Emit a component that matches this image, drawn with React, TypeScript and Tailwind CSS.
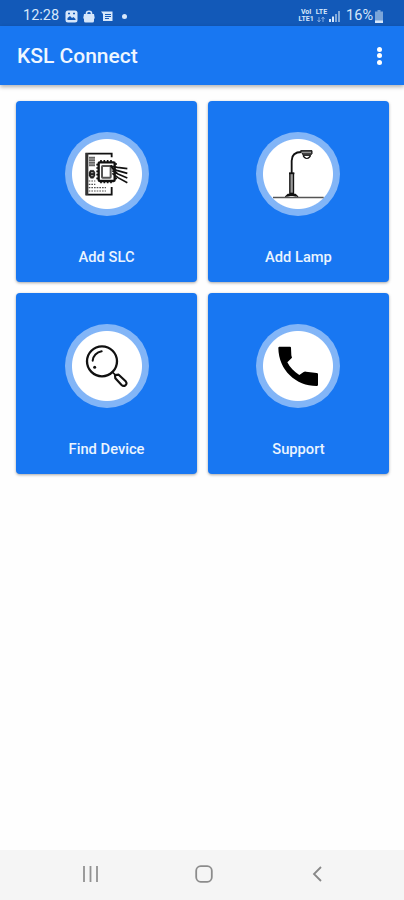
import type { ReactNode } from "react";

const SlcIcon = () => (
  <svg viewBox="27 21 252 252" className="size-full" fill="none" stroke="#111">
    <path d="M167 97V86H91v123h76v-23" strokeWidth="5.5" />
    <path d="M93 84v126" strokeWidth="8" stroke="#333" />
    <path d="M99 97h18M99 102h18M99 107h18M99 112h18M99 117h18M99 122h18" strokeWidth="4" stroke="#666" />
    <path d="M103 136h10l4 6v10l-5 8h-8l-5-8v-10z" fill="#222" strokeWidth="1" />
    <path d="M105 143h7M105 152h7" strokeWidth="3" stroke="#aaa" />
    <path d="M98 168h20M98 178h20M98 188h52M98 198h52" strokeWidth="3.5" strokeDasharray="5 3" stroke="#555" />
    <rect x="128" y="112" width="48" height="56" rx="3" strokeWidth="7" />
    <path d="M135 105v6M145 105v6M155 105v6M165 105v6M135 169v6M145 169v6M155 169v6M165 169v6" strokeWidth="5" />
    <path d="M121 119h6M121 129h6M121 139h6M121 149h6M121 160h6M177 117h6M177 160h6" strokeWidth="5" />
    <rect x="138" y="123" width="26" height="35" rx="2" strokeWidth="6" stroke="#555" />
    <path
      d="M164 123l20 4 30 4M168 130l17 7 29 8M169 137l17 10 28 12M169 145l17 13 28 15"
      strokeWidth="5"
    />
    <path d="M164 121l18 24" strokeWidth="6" />
  </svg>
);

const LampIcon = () => (
  <svg viewBox="24 21 252 252" className="size-full" fill="none" stroke="#111">
    <path d="M131 145v-38c0-17 9-26 30-26" strokeWidth="5.5" />
    <path d="M158 77h34v9l-5 5h-21z" fill="#444" strokeWidth="3" />
    <path d="M160 82h29" strokeWidth="2.5" stroke="#bbb" />
    <path d="M165 91l4 6c4 4 11 4 15 0l4-6" strokeWidth="4" />
    <rect x="125.5" y="145" width="11" height="60" strokeWidth="4" fill="#999" />
    <path d="M123 145h16" strokeWidth="5" />
    <path d="M112 216l8-8h22l8 8M117 213l10-2h8l10 2" strokeWidth="4" />
    <path d="M75 217.5h152" strokeWidth="5" stroke="#555" />
  </svg>
);

const SearchIcon = () => (
  <svg viewBox="27 21 252 252" className="size-full" fill="none" stroke="#111" strokeLinecap="round">
    <circle cx="138" cy="133" r="45" strokeWidth="7" />
    <path d="M110 131c1-14 12-26 27-28" strokeWidth="6" />
    <circle cx="116" cy="151" r="4.5" fill="#111" stroke="none" />
    <path d="M169 165l8 8" strokeWidth="5" />
    <path
      d="M177 174l11-1 21 20c4 5 3 9-1 12s-8 2-12-2l-18-19z"
      strokeWidth="6.5"
      strokeLinejoin="round"
    />
  </svg>
);

const PhoneIcon = () => (
  <svg viewBox="24 21 252 252" className="size-full" fill="#000">
    <path d="M94 89h32q3 0 3 3l1 23 2 7-14 14c8 16 20 28 36 38l13-9q3-2 7-1l32 4q4 0 4 4v31q0 4-4 4C144 207 92 160 91 93q0-4 3-4z" />
  </svg>
);

const items: { title: string; icon: ReactNode }[] = [
  { title: "Add SLC", icon: <SlcIcon /> },
  { title: "Add Lamp", icon: <LampIcon /> },
  { title: "Find Device", icon: <SearchIcon /> },
  { title: "Support", icon: <PhoneIcon /> },
];

const StatusBar = () => (
  <div className="flex h-[26px] items-center bg-[#1259b8] pt-[6px] pr-[21px] pl-[23px] text-[#d6e7fb]">
    <span className="w-[42px] text-[14.5px] leading-none">12:28</span>
    <svg width="13" height="13" viewBox="0 0 13 13">
      <rect x="0.5" y="0.5" width="12" height="12" rx="2.5" fill="currentColor" />
      <path d="M2.5 10V8l2.5-2 2 2 1.5-1 2 2v1z" fill="#1259b8" />
      <path d="M3 3.5h2M8 3.5h2" stroke="#1259b8" strokeWidth="1.3" />
    </svg>
    <svg width="12" height="13" viewBox="0 0 12 13" className="ml-[5px]">
      <path d="M1 4h10l.8 4.5H11V11q0 1.5-1.5 1.5h-7Q1 12.5 1 11V8.5H.2z" fill="currentColor" />
      <path d="M3.5 5V3.3q0-2 2.5-2t2.5 2V5" fill="none" stroke="currentColor" strokeWidth="1.6" />
    </svg>
    <svg width="12" height="11" viewBox="0 0 12 11" className="ml-[6px]">
      <path d="M0 0.5h11.5V10H2V3z" fill="currentColor" />
      <path d="M4 3.5h6M4 5.5h6M4 7.5h4" stroke="#1259b8" />
    </svg>
    <span className="ml-[9px] size-[5px] rounded-full bg-current" />

    <div className="ml-auto flex flex-col items-center text-[7px] leading-[7px] font-bold">
      <span>VoI</span>
      <span>LTE1</span>
    </div>
    <div className="ml-[2px] flex flex-col items-center text-[7px] leading-[7px] font-bold">
      <span>LTE</span>
      <svg width="8" height="7" viewBox="0 0 8 7" fill="none" stroke="#7ea9df">
        <path d="M2 1v5M0.5 4L2 6l1.5-2M6 6V1M4.5 3L6 1l1.5 2" />
      </svg>
    </div>
    <svg width="11" height="11" viewBox="0 0 11 11" className="ml-[2px]">
      <path d="M0 8h2v3H0zM3 5.5h2V11H3z" fill="currentColor" />
      <path d="M6 3h2v8H6zM9 0h2v11H9z" fill="#83aada" />
    </svg>
    <span className="ml-[6px] text-[14.5px] leading-none">16%</span>
    <svg width="8" height="13" viewBox="0 0 8 13" className="ml-[2px]">
      <path d="M2.5 0h3v1.5H8V13H0V1.5h2.5z" fill="#7ba5d9" />
      <path d="M0 10.5h8V13H0z" fill="currentColor" />
    </svg>
  </div>
);

const App = () => {
  return (
    <div className="flex h-[900px] w-[404px] flex-col overflow-hidden bg-[#fefefe] font-['Roboto',sans-serif]">
      <StatusBar />
      <header className="flex h-[59px] items-center justify-between bg-[#1877f2] pr-[22px] pl-[17px] shadow-[0_2px_4px_rgba(0,0,0,0.3)]">
        <h1 className="pt-[2px] text-[21px] font-medium text-[#eef6ff]">KSL Connect</h1>
        <button aria-label="Menu" className="flex flex-col gap-[1.5px]">
          <span className="size-[5px] rounded-full bg-white" />
          <span className="size-[5px] rounded-full bg-white" />
          <span className="size-[5px] rounded-full bg-white" />
        </button>
      </header>

      <main className="grid grow grid-cols-2 content-start gap-x-[10.8px] gap-y-[11px] pt-[15.5px] pr-[15px] pl-4">
        {items.map((item) => (
          <button
            key={item.title}
            className="flex h-[181px] flex-col items-center rounded-[4px] bg-[#1877f2] pt-[31.5px] shadow-[0_1px_3px_rgba(0,0,0,0.35)]">
            <span className="flex size-[84px] rounded-full bg-[radial-gradient(circle,#fff_34.5px,#82b5f7_35.5px)]">
              {item.icon}
            </span>
            <span className="mt-[30.5px] text-[14.7px] leading-[21px] font-medium text-[#eaf4ff]">
              {item.title}
            </span>
          </button>
        ))}
      </main>

      <nav className="flex h-[50px] items-center bg-[#f5f5f5] pr-[82px] pl-[82px]">
        <svg width="16" height="16" viewBox="0 0 16 16" className="mt-[-2px]">
          <path d="M2 0v16M8.5 0v16M15 0v16" stroke="#929292" strokeWidth="1.8" />
        </svg>
        <svg width="18" height="18" viewBox="0 0 18 18" className="mt-[-2px] ml-[97px]" fill="none">
          <rect x="1.2" y="1.2" width="15.6" height="15.6" rx="4.5" stroke="#8c8c8c" strokeWidth="1.8" />
        </svg>
        <svg width="10" height="16" viewBox="0 0 10 16" className="mt-[-2px] ml-auto" fill="none">
          <path d="M9 1L2 8l7 7" stroke="#888" strokeWidth="1.8" />
        </svg>
      </nav>
    </div>
  );
};

export default App;
